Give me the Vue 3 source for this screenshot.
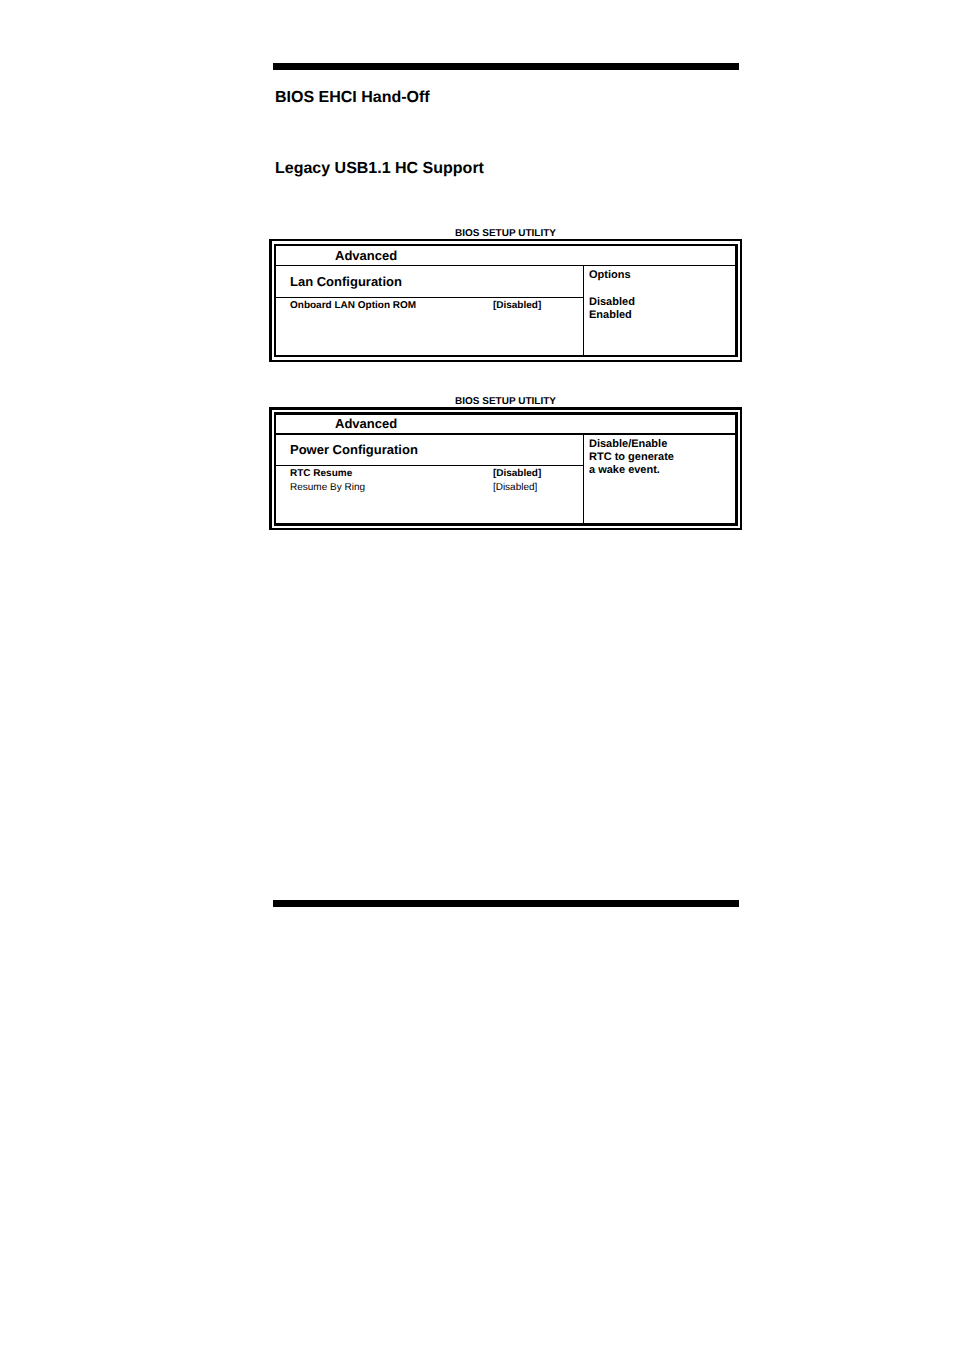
<script setup>
const headings = ["BIOS EHCI Hand-Off", "Legacy USB1.1 HC Support"]

const panels = [
    {
        title: "Lan Configuration",
        heavy: false,
        items: [
            { name: "Onboard LAN Option ROM", value: "[Disabled]", active: true },
        ],
        help: ["Options", "", "Disabled", "Enabled"],
    },
    {
        title: "Power Configuration",
        heavy: true,
        items: [
            { name: "RTC Resume", value: "[Disabled]", active: true },
            { name: "Resume By Ring", value: "[Disabled]", active: false },
        ],
        help: ["Disable/Enable", "RTC to generate", "a wake event."],
    },
]
</script>

<template>

<div class="page">
    <main class="sheet">
        <h2 v-for="heading in headings" :key="heading">{{ heading }}</h2>

        <section v-for="panel in panels" :key="panel.title" class="setup">
            <p class="caption">BIOS SETUP UTILITY</p>
            <div class="frame" :class="{ heavy: panel.heavy }">
                <div class="screen">
                    <div class="menu">Advanced</div>
                    <div class="body">
                        <div class="settings">
                            <h3>{{ panel.title }}</h3>
                            <table>
                                <tbody>
                                    <tr v-for="item in panel.items" :key="item.name" :class="{ active: item.active }">
                                        <th scope="row">{{ item.name }}</th>
                                        <td>{{ item.value }}</td>
                                    </tr>
                                </tbody>
                            </table>
                        </div>
                        <div class="help">
                            <p v-for="(line, i) in panel.help" :key="i">{{ line }}</p>
                        </div>
                    </div>
                </div>
            </div>
        </section>
    </main>
</div>

</template>

<style>
body {
    margin: 0;
    background: white;
}
</style>

<style scoped>
.page {
    display: grid;
    grid-template-columns: 273fr 466fr 215fr;
    padding: 63px 0;
    font-family: "Liberation Sans", Arial, sans-serif;
    text-rendering: geometricPrecision;
    color: black;
}
.sheet {
    grid-column: 2;
    border-top: 7px solid black;
    border-bottom: 7px solid black;
    padding: 18px 0 370px;
}
h2 {
    margin: 0 0 0 2px;
    font-size: 16px;
    line-height: 20px;
}
h2 + h2 {
    margin-top: 51px;
}
h3, p {
    margin: 0;
}
/* the frames stick out a little past the page rules */
.setup {
    margin: 49px -3px 0 -4px;
}
.setup + .setup {
    margin-top: 34px;
}
.caption {
    font-size: 10px;
    font-weight: bold;
    line-height: 11px;
    text-align: center;
}
.frame {
    border: 2px solid black;
    border-left-width: 3px;
    padding: 3px 2px;
}
.screen {
    border: 2px solid black;
    border-right-width: 3px;
}
.menu {
    padding-left: 59px;
    border-bottom: 1px solid black;
    font-size: 13px;
    font-weight: bold;
    line-height: 19px;
}
.body {
    display: grid;
    grid-template-columns: 308fr 151fr;
}
.settings {
    min-height: 89px;
    border-right: 1px solid black;
}
h3 {
    padding-left: 14px;
    border-bottom: 1px solid black;
    font-size: 13px;
    line-height: 31px;
}
table {
    width: 100%;
    margin-top: 1px;
    table-layout: fixed;
    border-collapse: collapse;
    font-size: 10px;
    line-height: 14px;
}
th, td {
    padding: 0 0 0 2px;
    font-weight: normal;
    text-align: left;
}
th {
    width: 70%;
    padding-left: 14px;
    box-sizing: border-box;
}
.active th, .active td {
    font-weight: bold;
}
.help {
    padding: 3px 5px;
    font-size: 11px;
    font-weight: bold;
    line-height: 13px;
}
.help p:empty {
    height: 14px;
}
.heavy {
    border-top-width: 3px;
    padding: 2px;
}
.heavy .screen {
    border-width: 3px 3px 3px 2px;
}
.heavy .menu {
    border-bottom-width: 2px;
    line-height: 18px;
}
.heavy h3 {
    line-height: 30px;
}
.heavy .settings {
    min-height: 88px;
}
</style>
